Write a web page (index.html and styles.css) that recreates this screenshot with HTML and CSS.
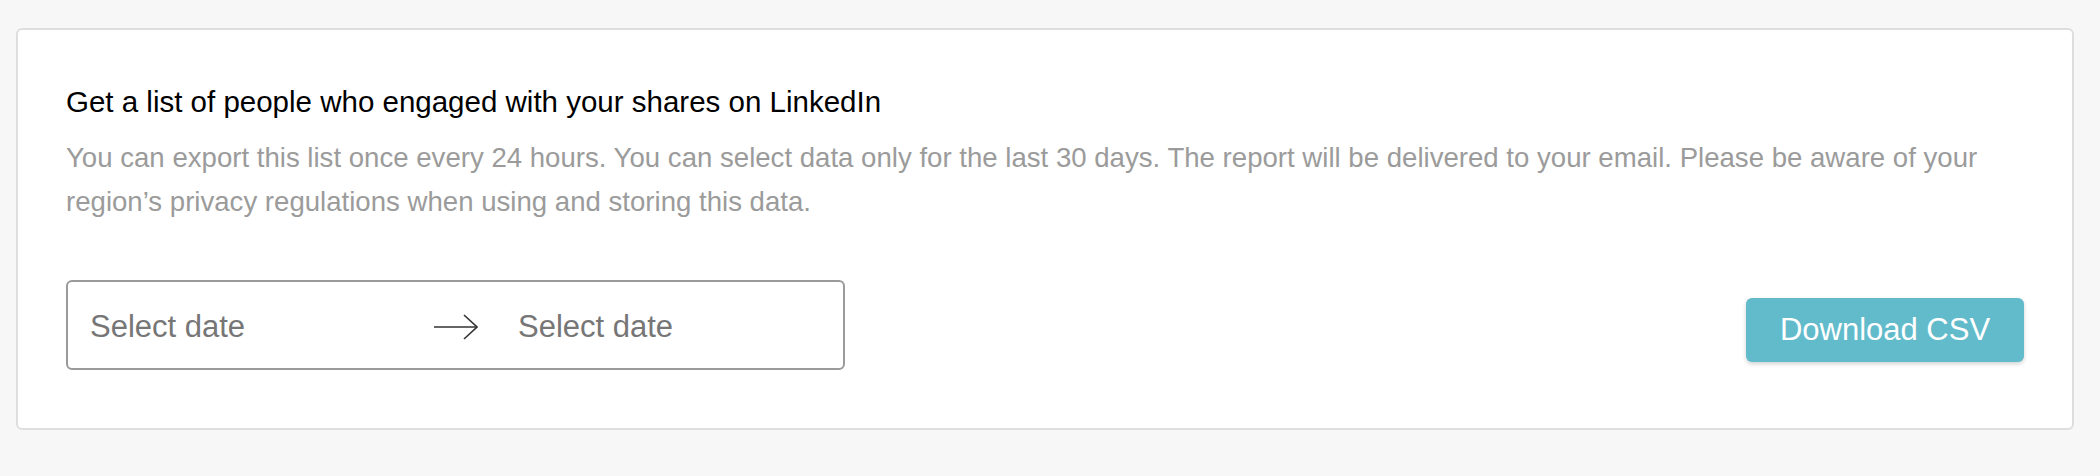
FILE: index.html
```html
<!DOCTYPE html>
<html lang="en">
<head>
  <meta charset="UTF-8" />
  <meta name="viewport" content="width=device-width, initial-scale=1.0"/>
  <title>Export engagement</title>
  <link rel="stylesheet" href="styles.css">
</head>
<body>
  <main class="page">
    <section class="card">
      <h2 class="card-title">Get a list of people who engaged with your shares on LinkedIn</h2>
      <p class="card-text">You can export this list once every 24 hours. You can select data only for the last 30 days. The report will be delivered to your email. Please be aware of your region’s privacy regulations when using and storing this data.</p>
      <div class="actions">
        <div class="range">
          <input class="range-input" type="text" placeholder="Select date" />
          <span class="range-sep">
            <svg width="44" height="26" viewBox="0 0 44 26" fill="none" stroke="#333" stroke-width="1.6">
              <path d="M0 13 H43" />
              <path d="M30 1 L43 13 L30 25" />
            </svg>
          </span>
          <input class="range-input" type="text" placeholder="Select date" />
        </div>
        <button class="btn" type="button">Download CSV</button>
      </div>
    </section>
  </main>
</body>
</html>
```

FILE: styles.css
```css
* { box-sizing: border-box; margin: 0; padding: 0; }
body {
  background: #f7f7f7;
  font-family: "Liberation Sans", Arial, sans-serif;
  color: #000;
}
.page { padding: 28px 26px 0 16px; }
.card {
  background: #fff;
  border: 2px solid #dedede;
  border-radius: 6px;
  padding: 55px 48px 58px 48px;
}
.card-title {
  font-size: 29.5px;
  font-weight: normal;
  line-height: 34px;
  color: #000;
}
.card-text {
  margin-top: 17px;
  font-size: 27.6px;
  line-height: 44px;
  color: #9b9b9b;
}
.actions {
  margin-top: 56px;
  display: flex;
  justify-content: space-between;
  align-items: flex-end;
}
.range {
  width: 779px;
  height: 90px;
  border: 2px solid #9a9a9a;
  border-radius: 6px;
  display: flex;
  align-items: center;
  gap: 40px;
  padding: 4px 21px 0 22px;
}
.range-input {
  flex: 1;
  min-width: 0;
  border: none;
  outline: none;
  background: transparent;
  font-family: inherit;
  font-size: 31px;
  color: #333;
}
.range-input::placeholder { color: #767676; }
.range-sep { display: flex; }
.btn {
  width: 278px;
  height: 64px;
  margin-bottom: 8px;
  background: #62bbcb;
  color: #fff;
  border: none;
  border-radius: 6px;
  box-shadow: 0 2px 4px rgba(0, 0, 0, 0.18);
  font-family: inherit;
  font-size: 31px;
  cursor: pointer;
}
```
